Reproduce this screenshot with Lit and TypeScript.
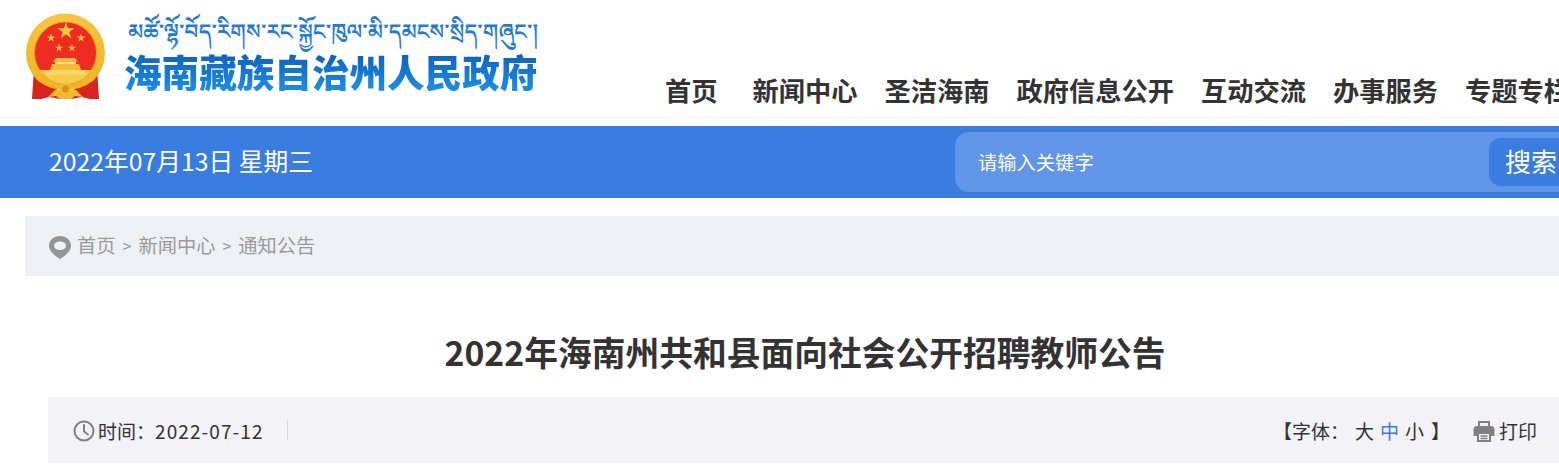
import { LitElement, html, css } from "lit";
import { customElement } from "lit/decorators.js";

const star = (cx: number, cy: number, r: number) => {
  const pts: string[] = [];
  for (let i = 0; i < 10; i++) {
    const rad = i % 2 ? r * 0.38 : r;
    const a = -Math.PI / 2 + (i * Math.PI) / 5;
    pts.push(`${(cx + rad * Math.cos(a)).toFixed(1)},${(cy + rad * Math.sin(a)).toFixed(1)}`);
  }
  return pts.join(" ");
};

@customElement("app-root")
export class AppRoot extends LitElement {
  static styles = css`
    :host {
      display: block;
      width: 1559px;
      height: 470px;
      overflow: hidden;
      background: #fff;
      font-family: "Noto Sans CJK SC", "Noto Sans", sans-serif;
      color: #333;
    }
    .page { width: 1640px; }
    .top { display: flex; height: 126px; }
    .brand { width: 665px; padding: 12px 0 0 25px; box-sizing: border-box; display: flex; gap: 16px; flex: none; }
    .emblem { width: 84px; height: 88px; flex: none; }
    .names { display: flex; flex-direction: column; margin-left: -1px; padding-top: 15px; }
    .tibetan {
      font-family: "Noto Sans Tibetan", "Noto Serif Tibetan", "DejaVu Sans", sans-serif;
      font-size: 21.25px; line-height: 22px; height: 22px; font-weight: 600; color: #1f7bd9; white-space: nowrap; margin-left: 4px;
    }
    .cn {
      font-size: 37.6px; line-height: 40px; font-weight: 900; white-space: nowrap; margin-top: 2px;
      background: linear-gradient(180deg, #0b5fbd, #1a8eea); -webkit-background-clip: text; background-clip: text; color: transparent;
    }
    nav { display: flex; gap: 27px; padding-top: 70px; font-size: 26.25px; line-height: 40px; font-weight: 700; color: #333; white-space: nowrap; }
    nav a:first-child { margin-right: 8px; }
    .bar { height: 72px; background: #3a7de0; display: flex; align-items: center; color: #fff; }
    .date { width: 955px; flex: none; padding: 0 0 4px 49px; box-sizing: border-box; font-size: 24.75px; white-space: nowrap; }
    .search { width: 650px; height: 60px; flex: none; background: #6195e8; border-radius: 14px; display: flex; align-items: center; justify-content: space-between; padding: 0 0 0 23px; box-sizing: border-box; }
    .ph { font-size: 19.3px; }
    .btn { width: 116px; height: 48px; background: #3a7de0; border-radius: 12px; font-size: 26px; line-height: 46px; padding-left: 16px; box-sizing: border-box; }
    .crumb-wrap { padding: 18px 0 0 25px; }
    .crumb { height: 60px; background: #edf1f5; display: flex; align-items: center; padding-left: 24px; font-size: 19.25px; color: #999; gap: 5px; white-space: nowrap; }
    .crumb svg { width: 24px; height: 26px; flex: none; margin-top: 2px; margin-left: -1px; }
    .sep { font-size: 16px; margin: 0 2px; }
    .crumb .links { display: flex; align-items: center; gap: 5px; padding-bottom: 2px; }
    h1 { margin: 0; height: 121px; box-sizing: border-box; padding: 51px 0 0 0; width: 1610px; text-align: center; font-size: 33.75px; line-height: 50px; font-weight: 700; color: #333; white-space: nowrap; }
    .meta-wrap { padding-left: 48px; }
    .meta { height: 66px; width: 1511px; box-sizing: border-box; background: #f2f2f7; display: flex; align-items: center; justify-content: space-between; padding: 0 22px 0 25px; font-size: 19px; color: #333; white-space: nowrap; }
    .left, .right { display: flex; align-items: center; }
    .left svg { width: 22px; height: 22px; margin-right: 3px; margin-top: 1px; }
    .divider { width: 1px; height: 20px; background: #d9d9dd; margin-left: 23px; }
    .stamp { letter-spacing: 1.1px; font-size: 19px; }
    .sz { margin-left: 7px; width: 18px; text-align: center; }
    .sz.first { margin-left: 6px; }
    .sz.cur { color: #3a7de0; }
    .close { margin-left: 8px; }
    .print { display: flex; align-items: center; margin-left: 23px; gap: 4px; color: #333; }
    .print svg { width: 22px; height: 22px; margin-top: 1px; }
  `;

  render() {
    return html`
      <div class="page">
        <header class="top">
          <div class="brand">
            <svg class="emblem" viewBox="0 0 84 88" aria-label="国徽">
              <defs>
                <linearGradient id="gold" x1="0" y1="0" x2="0" y2="1">
                  <stop offset="0" stop-color="#f7c63f" /><stop offset="1" stop-color="#efb324" />
                </linearGradient>
              </defs>
              <path d="M9 56 L30 72 L35 87 L24 85 L16 87 L7 87 Z" fill="#d9231f" />
              <path d="M72 56 L51 72 L46 87 L57 85 L65 87 L74 87 Z" fill="#d9231f" />
              <path d="M1 41 A39.500 39.500 0 0 1 80 41 A39.500 39.500 0 0 1 68 69 Q56 78 40.500 78 Q25 78 13 69 A39.500 39.500 0 0 1 1 41 Z" fill="url(#gold)" />
              <circle cx="40.500" cy="41" r="31" fill="#ee2c22" stroke="#e39c17" stroke-width="1" />
              <path d="M14.500 58 H66.500 A31 31 0 0 1 40.500 72 A31 31 0 0 1 14.500 58 Z" fill="#f7cb4a" />
              <path d="M31 46 H50 L53 49.500 H28 Z" fill="#f6c23a" />
              <path d="M30 49.500 H51 V52 H30 Z" fill="#fbe08a" />
              <path d="M27 52 H54 L56 58 H25 Z" fill="#f5bd33" />
              <path d="M21 58 H60 V63 H21 Z" fill="#fad567" />
              <polygon points="${star(41, 19, 9)}" fill="#f8c836" />
              <polygon points="${star(26, 26, 4.500)}" fill="#f8c836" />
              <polygon points="${star(56, 26, 4.500)}" fill="#f8c836" />
              <polygon points="${star(34, 36, 4.200)}" fill="#f8c836" />
              <polygon points="${star(47, 36, 4.200)}" fill="#f8c836" />
              <path d="M23 85 L30 78 L35 78 L40.500 70 L46 78 L51 78 L58 85 L50 84 L46 87 L35 87 L31 84 Z" fill="#f3bb2c" />
              <circle cx="40.500" cy="77" r="3.500" fill="#d98f14" />
            </svg>
            <div class="names">
              <div class="tibetan" lang="bo">མཚོ་ལྷོ་བོད་རིགས་རང་སྐྱོང་ཁུལ་མི་དམངས་སྲིད་གཞུང་།</div>
              <div class="cn">海南藏族自治州人民政府</div>
            </div>
          </div>
          <nav>
            <a>首页</a><a>新闻中心</a><a>圣洁海南</a><a>政府信息公开</a><a>互动交流</a><a>办事服务</a><a>专题专栏</a>
          </nav>
        </header>

        <section class="bar">
          <div class="date">2022年07月13日 星期三</div>
          <div class="search">
            <span class="ph">请输入关键字</span>
            <span class="btn">搜索</span>
          </div>
        </section>

        <div class="crumb-wrap">
          <div class="crumb">
            <svg viewBox="0 0 24 26">
              <path fill-rule="evenodd" fill="#959595" d="M12 2C5.800 2 1 6 1 12c0 5 6.500 10.500 11 13 4.500-2.500 11-8 11-13C23 6 18.200 2 12 2Zm0 5.500c3.300 0 6 1.800 6 4.200S15.300 16 12 16s-6-1.900-6-4.300S8.700 7.500 12 7.500Z" />
            </svg>
            <span class="links"><span>首页</span><span class="sep">&gt;</span><span>新闻中心</span><span class="sep">&gt;</span><span>通知公告</span></span>
          </div>
        </div>

        <h1>2022年海南州共和县面向社会公开招聘教师公告</h1>

        <div class="meta-wrap">
          <div class="meta">
            <div class="left">
              <svg viewBox="0 0 22 22" fill="none" stroke="#808080" stroke-width="2">
                <circle cx="11" cy="11" r="9.500" />
                <path d="M11 5v6.500l4 3" stroke-linecap="round" stroke-linejoin="round" />
              </svg>
              <span>时间：</span><span class="stamp">2022-07-12</span>
              <span class="divider"></span>
            </div>
            <div class="right">
              <span>【字体：</span>
              <span class="sz first">大</span><span class="sz cur">中</span><span class="sz">小</span>
              <span class="close">】</span>
              <span class="print">
                <svg viewBox="0 0 22 22">
                  <path fill="#808080" d="M5 1h12v5h-2V3H7v3H5Z" />
                  <path fill="#808080" d="M4 6h14a3.500 3.500 0 0 1 3.500 3.500V16H18v-4H4v4H.5V9.500A3.500 3.500 0 0 1 4 6Z" />
                  <path fill="none" stroke="#808080" stroke-width="2" d="M5 13h12v8H5Z" />
                  <path stroke="#808080" stroke-width="1.500" d="M7.500 16h7M7.500 18.500h7" />
                </svg>
                <span>打印</span>
              </span>
            </div>
          </div>
        </div>
      </div>
    `;
  }
}
